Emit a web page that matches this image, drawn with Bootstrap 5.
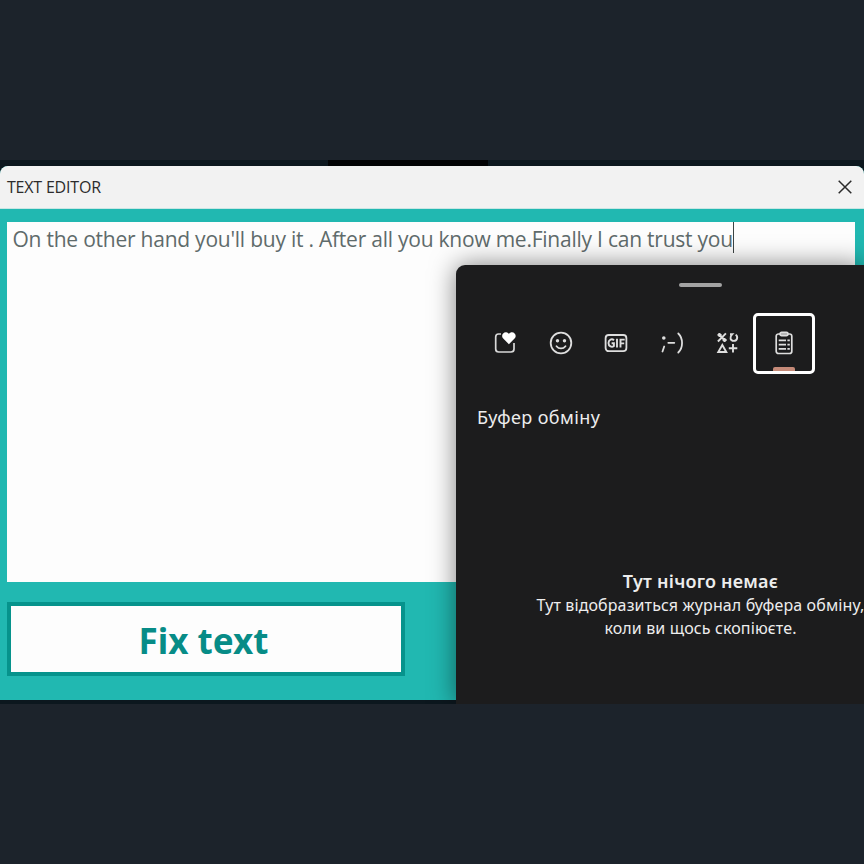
<!DOCTYPE html>
<html lang="uk">
<head>
<meta charset="utf-8">
<meta name="viewport" content="width=device-width, initial-scale=1">
<title>Text editor</title>
<link href="https://cdn.jsdelivr.net/npm/bootstrap@5.3.0/dist/css/bootstrap.min.css" rel="stylesheet">
<style>
body{background:#1c232b;font-family:"Noto Sans","Open Sans",sans-serif;height:864px}
.stage{padding-top:160px}
.screen{height:544px;background:#0c171e;padding-top:6px}
.behind{left:328px;top:0;width:160px;height:6px;background:#020304}
.editor{height:534px;background:#21b8b1;border-radius:8px 8px 0 0}
.titlebar{height:43px;background:#f2f2f2;border-radius:8px 8px 0 0;padding:0 12px 0 7px;border-bottom:1px solid #c9e6e4}
.caption{font-family:"Open Sans",sans-serif;font-size:16px;color:#2c2c2c;letter-spacing:-.2px}
.workarea{padding:13px 9px 0 7px}
.textpad{height:360px;background:#fdfdfd;padding-left:5.5px;color:#5f6b6b;font-family:"Open Sans",sans-serif;font-size:21px;letter-spacing:-.235px;line-height:35px;white-space:pre}
.caret{width:1.5px;height:31px;background:#3c4444}
.fix{width:398px;height:74px;margin-top:20px;background:#fdfdfd;border:4px solid #06938c;border-radius:0;color:#078c87;font-size:35px;font-weight:700;line-height:1}
.fix span{padding:3px 5px 0 0}
.clip-panel{left:456px;top:105px;width:408px;height:439px;background:#1c1c1d;border-radius:9px 0 0 0;box-shadow:0 0 26px rgba(0,0,0,.5);color:#ededed}
.clip-area{clip-path:inset(6px 0 0 0);left:0;top:0;width:864px;height:544px}
.grip{width:43px;height:4px;background:#a3a3a3;margin:18px 0 0 223px}
.tabs{margin:26px 0 0 21px}
.tab{width:55.8px;height:61px}
.tab svg{display:block;margin-bottom:2px}
.tab.active{width:62px;border:3px solid #fff;border-radius:5px;margin-left:-3px}
.under{bottom:0;left:17px;width:22px;height:4px;background:#c58a78;border-radius:2px 2px 0 0}
.heading{font-size:18px;line-height:24px;letter-spacing:.4px;margin:31px 0 0 21px}
.empty{margin:140px -1px 0 80px;white-space:nowrap}
.empty-title{font-size:18px;font-weight:600;line-height:24px;letter-spacing:.2px}
.empty-text{font-size:16px;line-height:23px;letter-spacing:.12px;padding-top:1px}
</style>
</head>
<body class="overflow-hidden">
<main class="stage">
  <div class="screen position-relative">
    <div class="behind position-absolute"></div>
    <section class="editor">
      <header class="titlebar d-flex align-items-center justify-content-between">
        <span class="caption">TEXT EDITOR</span>
        <svg width="14" height="14" viewBox="0 0 14 14" fill="none" stroke="#2b2b2b" stroke-width="1.5"><path d="M.7.7 13.3 13.3M13.3.7.7 13.3"/></svg>
      </header>
      <div class="workarea">
        <div class="textpad d-flex align-items-start"><span>On the other hand you'll buy it . After all you know me.Finally I can trust you</span><span class="caret"></span></div>
        <button class="fix btn d-flex align-items-center justify-content-center p-0" type="button"><span>Fix text</span></button>
      </div>
    </section>
    <div class="clip-area position-absolute overflow-hidden">
      <aside class="clip-panel position-absolute">
        <div class="grip rounded-pill"></div>
        <nav class="tabs d-flex">
          <div class="tab d-flex align-items-center justify-content-center">
            <svg width="24" height="24" viewBox="0 0 24 24" fill="none"><path d="M8 3H5.500A3 3 0 0 0 2.700 6v12A3 3 0 0 0 5.700 21H18a3 3 0 0 0 3-3V12" stroke="#d8d8d8" stroke-width="1.700"/><path d="M15.900 13.300 10 7.300C7.600 4.500 10.500.4 14 1.500 15 1.800 15.500 2.300 15.900 2.900c.4-.6.900-1.100 1.900-1.400C21.300.4 24.200 4.500 21.800 7.300Z" fill="#fff"/></svg>
          </div>
          <div class="tab d-flex align-items-center justify-content-center">
            <svg width="24" height="24" viewBox="0 0 24 24" fill="none" stroke="#dedede" stroke-width="1.800" stroke-linecap="round"><circle cx="12" cy="12" r="10.300"/><path d="M7.500 15.200c2.400 3 6.600 3 9 0"/><g fill="#dedede" stroke="none"><circle cx="8.500" cy="9.700" r="1.700"/><circle cx="15.500" cy="9.700" r="1.700"/></g></svg>
          </div>
          <div class="tab d-flex align-items-center justify-content-center">
            <svg width="24" height="24" viewBox="0 0 24 24" fill="none" stroke="#dedede"><rect x="1.600" y="4" width="20.800" height="16.200" rx="3.200" stroke-width="1.800"/><path d="M10 9.200C7.900 7.300 4.500 8.500 4.500 12s3.400 4.700 5.400 3v-2.700H7.600M13 7.800v8.600M16.500 16.400V8.600h4.200M16.500 12.400h3.700" stroke-width="1.900"/></svg>
          </div>
          <div class="tab d-flex align-items-center justify-content-center">
            <svg width="24" height="24" viewBox="0 0 24 24" fill="none" stroke="#dedede" stroke-width="1.800" stroke-linecap="round"><path d="M4.200 15.500 2.500 20.500M8.300 11.800h6M18.300 2.500c5 5 5 14 0 19"/><circle cx="3.800" cy="7" r="1.800" fill="#dedede" stroke="none"/></svg>
          </div>
          <div class="tab d-flex align-items-center justify-content-center">
            <svg width="24" height="24" viewBox="0 0 24 24" fill="none" stroke="#dedede" stroke-width="1.900"><path d="M1.900 10.500 9.900 2.300M2.200 3l7.500 7"/><path d="M3.500 2v4M1.600 4h4M8.500 7v4M6.600 8.900h4" stroke-width="2"/><path d="M14 3.200h2.300C13 6.500 14.500 9.900 17.700 9.900c3.500 0 4.700-4 2-6.300" stroke-width="1.900"/><path d="M6.300 14 2.300 21h8ZM17 13v8.400M12.800 17.300h8.500"/></svg>
          </div>
          <div class="tab active position-relative d-flex align-items-center justify-content-center">
            <svg width="20" height="24" viewBox="0 0 20 24" fill="none" stroke="#dedede" stroke-width="1.700"><rect x="2.200" y="3" width="15.600" height="19.500" rx="2.300"/><rect x="6" y="1.400" width="8" height="3.300" rx="1.600" fill="#a8a8a8"/><path d="M4.700 9.300h7.300M4.700 13.600h7.300M4.700 17.900h7.300M13.400 9.300h2.400M13.400 13.600h2.400M13.400 17.900h2.400"/></svg>
            <span class="under position-absolute"></span>
          </div>
        </nav>
        <div class="heading">Буфер обміну</div>
        <div class="empty text-center">
          <div class="empty-title">Тут нічого немає</div>
          <div class="empty-text">Тут відобразиться журнал буфера обміну,<br>коли ви щось скопіюєте.</div>
        </div>
      </aside>
    </div>
  </div>
</main>
<script src="https://cdn.jsdelivr.net/npm/bootstrap@5.3.0/dist/js/bootstrap.bundle.min.js"></script>
</body>
</html>
